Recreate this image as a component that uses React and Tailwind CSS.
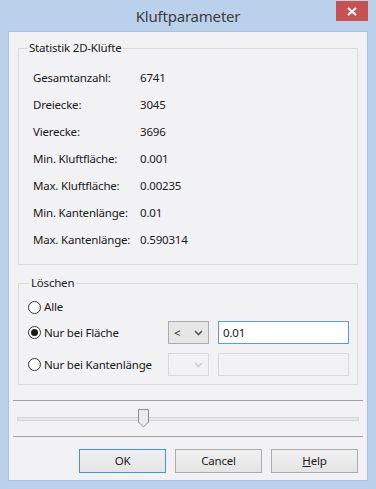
import React from "react";

const stats = [
  ["Gesamtanzahl:", "6741"],
  ["Dreiecke:", "3045"],
  ["Vierecke:", "3696"],
  ["Min. Kluftfläche:", "0.001"],
  ["Max. Kluftfläche:", "0.00235"],
  ["Min. Kantenlänge:", "0.01"],
  ["Max. Kantenlänge:", "0.590314"],
];

function Radio({ checked, label }) {
  return (
    <div className="flex items-center gap-[3px] w-[140px]">
      <span className="w-[13px] h-[13px] rounded-full border border-[#333] bg-white flex items-center justify-center">
        {checked && <span className="w-[7px] h-[7px] rounded-full bg-[#1a1a1a]" />}
      </span>
      <span>{label}</span>
    </div>
  );
}

function Combo({ disabled, value }) {
  return (
    <div
      className={
        disabled
          ? "w-[41px] h-[23px] border border-[#d9d9d9] bg-[#f2f1f4] flex items-center justify-between px-[5px] text-[#c8c8c8]"
          : "w-[41px] h-[23px] border border-[#acacac] bg-[#e6e6e6] flex items-center justify-between px-[5px]"
      }
    >
      <span>{value}</span>
      <svg width="9" height="6" viewBox="0 0 9 6">
        <path d="M1 1 L4.5 4.5 L8 1" fill="none" stroke={disabled ? "#cfcfcf" : "#555"} strokeWidth="1.6" />
      </svg>
    </div>
  );
}

function Button({ children, primary }) {
  return (
    <button
      type="button"
      className={
        "w-[87px] h-[24px] border bg-gradient-to-b from-[#f0f0f0] to-[#e5e5e5] " +
        (primary ? "border-[#3c94e5]" : "border-[#acacac]")
      }
    >
      {children}
    </button>
  );
}

export default function App() {
  return (
    <div
      className="w-[376px] h-[489px] bg-[#b9d1ea] flex flex-col text-[#1a1a1a]"
      style={{ fontFamily: "'Noto Sans', 'Open Sans', sans-serif" }}
    >
      <div className="h-[31px] flex items-start relative">
        <div className="flex-1 text-center text-[15px] tracking-[-0.2px] text-[#3d3d3d] pt-[5px]">Kluftparameter</div>
        <div className="absolute right-[8px] top-[1px] w-[32px] h-[20px] bg-[#c75050] flex items-center justify-center">
          <svg width="10" height="9" viewBox="0 0 10 9">
            <path d="M1 1 L9 8 M9 1 L1 8" stroke="white" strokeWidth="2.2" />
          </svg>
        </div>
      </div>

      <div className="mx-[8px] h-[450px] border border-[#a8c1df] bg-[#f2f1f4] flex flex-col text-[11.5px] tracking-[-0.2px]">
        <fieldset className="mx-[9px] mt-[8px] border border-[#dcdcdc] pl-[14px] pt-[8px] pb-[11px]">
          <legend className="ml-[-6px] px-[2px] leading-[16px]">Statistik 2D-Klüfte</legend>
          {stats.map(([label, value]) => (
            <div key={label} className="flex h-[27px] items-center">
              <span className="w-[107px]">{label}</span>
              <span>{value}</span>
            </div>
          ))}
        </fieldset>

        <fieldset className="mx-[9px] mt-[10px] border border-[#dcdcdc] pl-[9px] pt-[6px] pb-[8px]">
          <legend className="ml-[1px] px-[2px] leading-[16px]">Löschen</legend>
          <div className="h-[20px] flex items-center">
            <Radio label="Alle" />
          </div>
          <div className="mt-[4px] h-[23px] flex items-center">
            <Radio checked label="Nur bei Fläche" />
            <Combo value="<" />
            <div className="ml-[9px] w-[131px] h-[23px] border border-[#569de5] bg-white flex items-center px-[4px]">0.01</div>
          </div>
          <div className="mt-[9px] h-[23px] flex items-center">
            <Radio label="Nur bei Kantenlänge" />
            <Combo disabled value="" />
            <div className="ml-[9px] w-[131px] h-[23px] border border-[#d9d9d9] bg-[#f2f1f4]" />
          </div>
        </fieldset>

        <div className="mx-[4px] mt-[15px] border-t border-[#a0a0a0]" />
        <div className="h-[35px] mx-[8px] relative flex items-center">
          <div className="w-full h-[4px] border border-[#d6d6d6] bg-[#e7e7e7]" />
          <svg className="absolute left-[121px] top-[8px]" width="11" height="19" viewBox="0 0 11 19">
            <path d="M0.5 0.5 H10.5 V13 L5.5 18 L0.5 13 Z" fill="#ececec" stroke="#8c8c8c" />
          </svg>
        </div>
        <div className="mx-[4px] border-t border-[#a0a0a0]" />

        <div className="flex justify-end gap-[9px] pr-[9px] mt-[12px]">
          <Button primary>OK</Button>
          <Button>Cancel</Button>
          <Button>
            <span className="underline">H</span>elp
          </Button>
        </div>
      </div>
    </div>
  );
}
